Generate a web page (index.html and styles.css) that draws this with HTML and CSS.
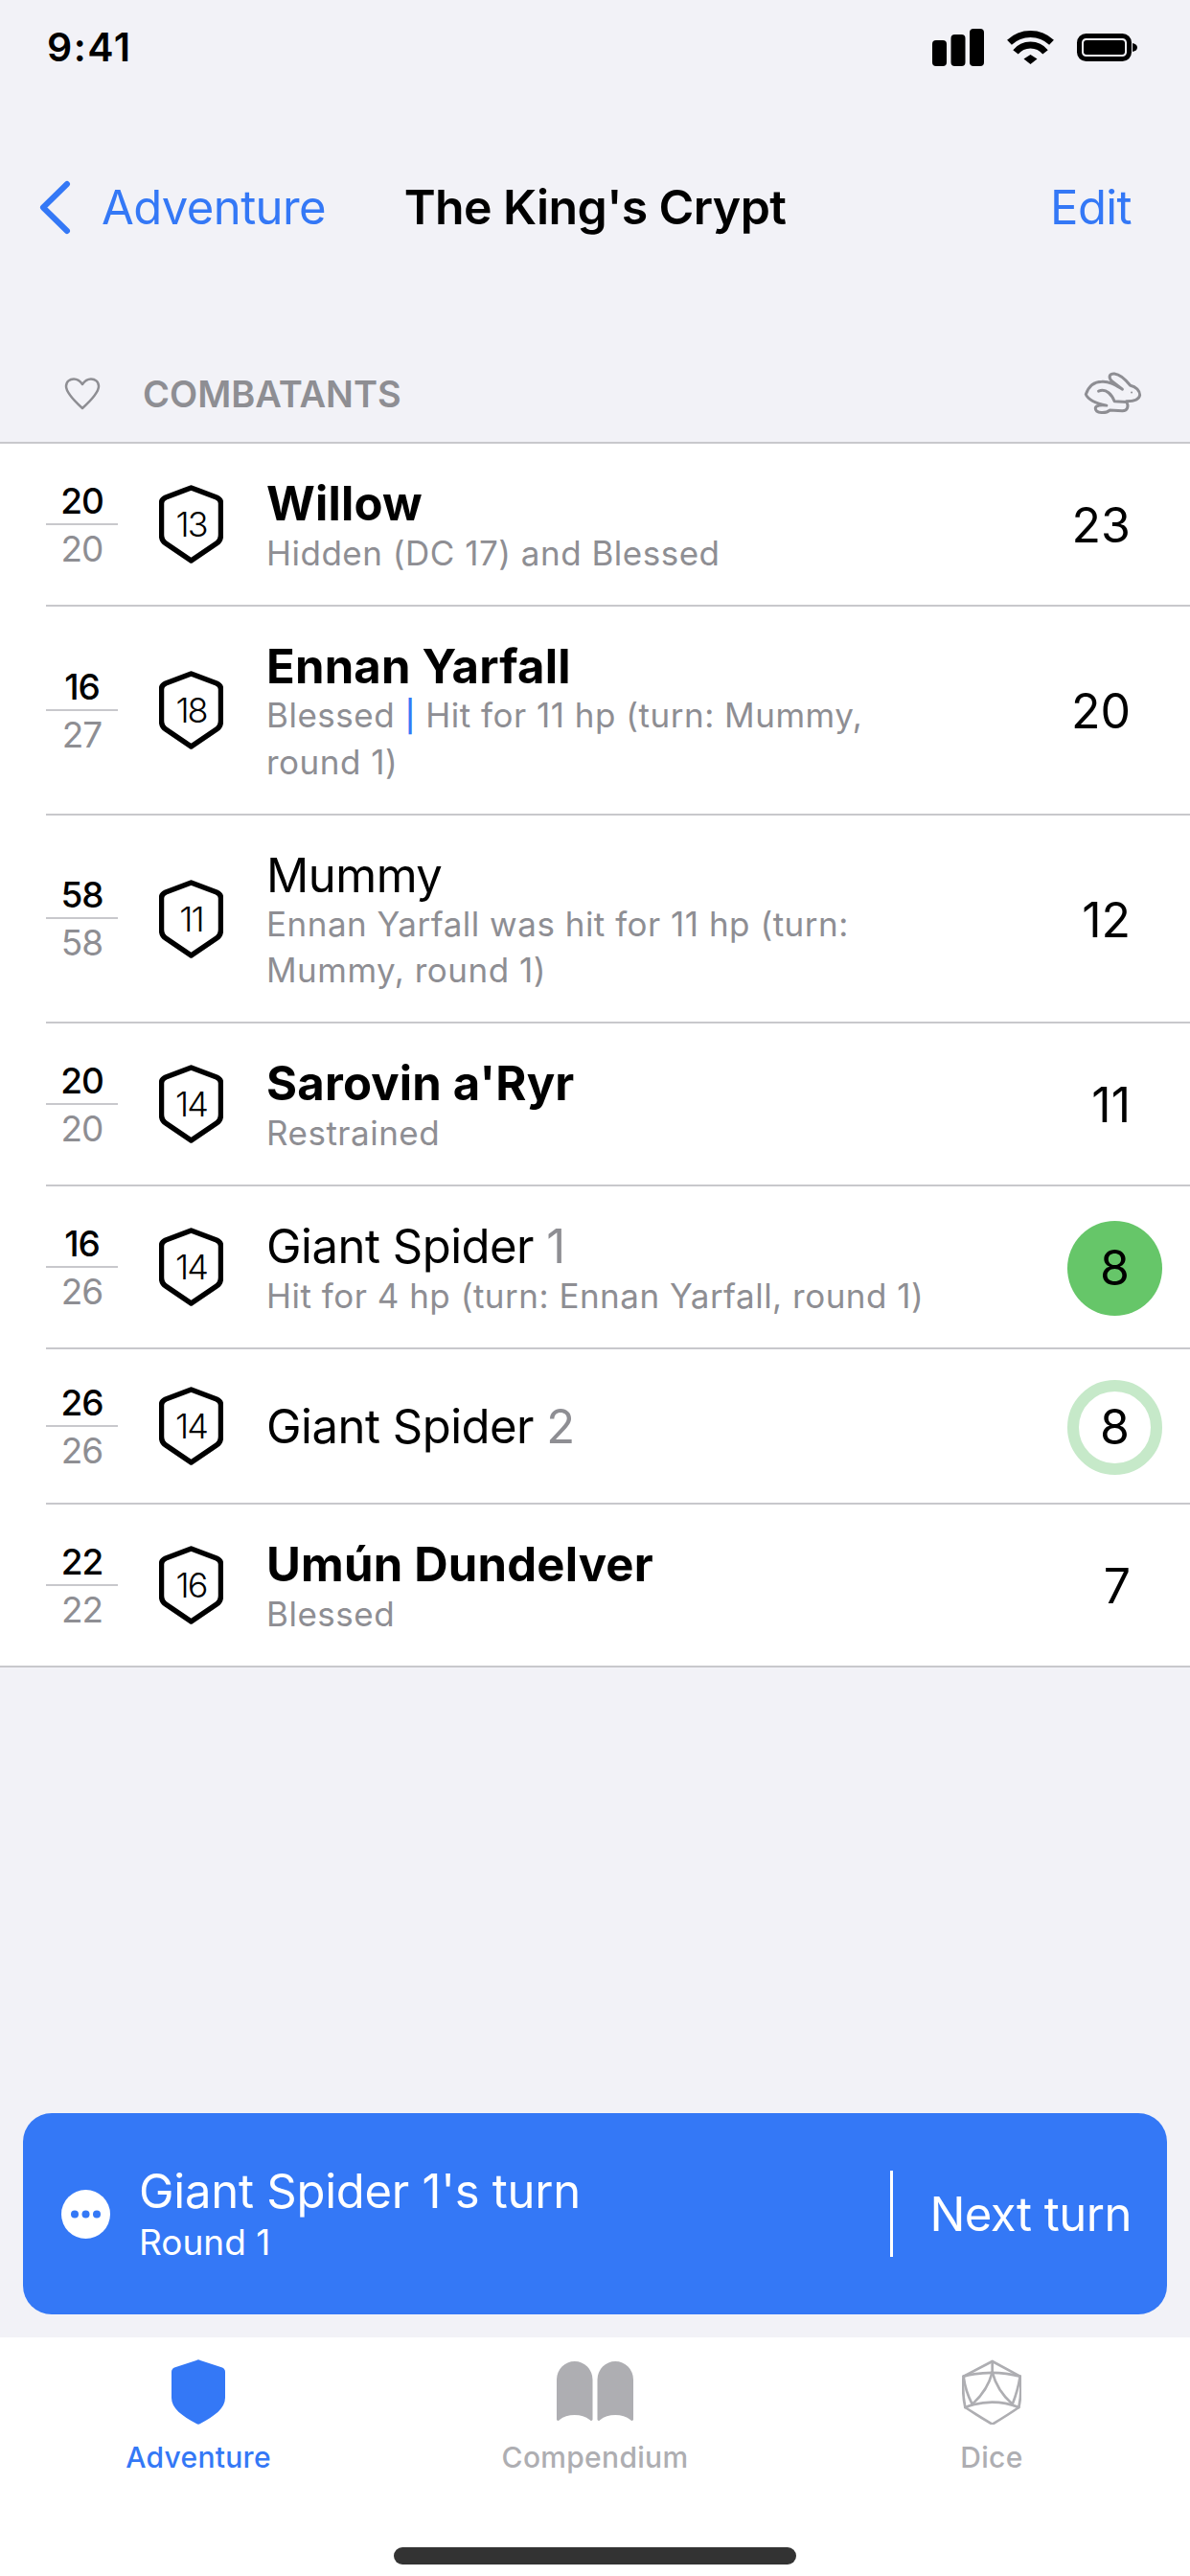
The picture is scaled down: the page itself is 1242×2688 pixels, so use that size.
FILE: index.html
```html
<!DOCTYPE html>
<html lang="en">
<head>
    <meta charset="UTF-8">
    <meta name="viewport" content="width=device-width, initial-scale=1.0">
    <title>The King's Crypt</title>
    <link rel="stylesheet" href="styles.css">
</head>
<body>

    <svg class="defs" width="0" height="0">
        <symbol id="shield" viewBox="0 0 67 82">
            <path d="M33.500 3 L60 13 Q64.500 15 64.500 19 V52 Q64.500 58 60 61 L33.500 79 L7 61 Q2.500 58 2.500 52 V19 Q2.500 15 7 13 Z" fill="none" stroke="#000" stroke-width="5.500" stroke-linejoin="round"/>
        </symbol>
    </svg>

    <!-- Status bar -->
    <div class="status">
        <span class="time">9:41</span>
        <div class="status-icons">
            <svg width="54" height="39" viewBox="0 0 54 39"><rect y="12" width="15" height="27" rx="4"/><rect x="19.500" y="6" width="15" height="33" rx="4"/><rect x="39" width="15" height="39" rx="4"/></svg>
            <svg width="49" height="35" viewBox="0 0 49 35"><path d="M2.500 12.300 A32 32 0 0 1 46.500 12.300" fill="none" stroke="#000" stroke-width="7"/><path d="M9 22.400 A20 20 0 0 1 40 22.400" fill="none" stroke="#000" stroke-width="7"/><path d="M17.500 29.500 L24.500 25 L31.500 29.500 L24.500 35 Z"/></svg>
            <svg width="63" height="29" viewBox="0 0 63 29"><rect x="2.500" y="2.500" width="52" height="24" rx="7" fill="none" stroke="#000" stroke-width="5"/><rect x="7" y="7" width="43" height="15" rx="3"/><path d="M58 10 Q63 11 63 14.500 Q63 18 58 19 Z"/></svg>
        </div>
    </div>

    <!-- Navbar -->
    <nav class="navbar">
        <a class="nav-back">
            <svg width="33" height="57" viewBox="0 0 33 57"><path d="M29 4 L4 28.500 L29 53" fill="none" stroke="#3478f6" stroke-width="6" stroke-linecap="round" stroke-linejoin="round"/></svg>
            <span>Adventure</span>
        </a>
        <h1 class="nav-title">The King's Crypt</h1>
        <a class="nav-edit">Edit</a>
    </nav>

    <!-- Section header -->
    <div class="section-head">
        <svg width="38" height="34" viewBox="0 0 38 34"><path d="M19 32 C8 22 2 15 2 9 C2 4 6 1.500 10 1.500 C14 1.500 17 4 19 7 C21 4 24 1.500 28 1.500 C32 1.500 36 4 36 9 C36 15 30 22 19 32 Z" fill="none" stroke="#8e8e93" stroke-width="2.500" stroke-linejoin="round"/></svg>
        <span class="section-title">COMBATANTS</span>
        <svg class="rabbit" width="63" height="47" viewBox="90 55 190 140" fill="none" stroke="#8e8e93" stroke-width="9" stroke-linecap="round" stroke-linejoin="round"><path d="M100 128 C108 105 125 88 150 88 C175 86 195 100 215 112 L180 85 C170 72 175 62 190 63 C208 65 228 85 240 100 C258 103 270 118 270 130 C268 145 250 150 228 150 C235 165 232 180 215 180 L175 178 C165 188 130 190 130 172 C130 162 150 160 165 163 C140 158 108 148 100 128 Z"/><path d="M140 118 C165 108 182 130 190 150 L228 152"/><circle cx="244" cy="122" r="3" fill="#8e8e93" stroke="none"/></svg>
    </div>

    <!-- Combatant list -->
    <main class="list-area">
        <ul class="list">
            <li class="row">
                <div class="hp"><span class="hp-cur">20</span><span class="hp-max">20</span></div>
                <div class="ac"><svg width="67" height="82"><use href="#shield"/></svg><span>13</span></div>
                <div class="info">
                    <div class="name strong">Willow</div>
                    <div class="note">Hidden (DC 17) and Blessed</div>
                </div>
                <div class="init">23</div>
            </li>
            <li class="row">
                <div class="hp"><span class="hp-cur">16</span><span class="hp-max">27</span></div>
                <div class="ac"><svg width="67" height="82"><use href="#shield"/></svg><span>18</span></div>
                <div class="info">
                    <div class="name strong">Ennan Yarfall</div>
                    <div class="note wrapped">Blessed <span class="sep">|</span> Hit for 11 hp (turn: Mummy,<br>round 1)</div>
                </div>
                <div class="init">20</div>
            </li>
            <li class="row">
                <div class="hp"><span class="hp-cur">58</span><span class="hp-max">58</span></div>
                <div class="ac"><svg width="67" height="82"><use href="#shield"/></svg><span>11</span></div>
                <div class="info">
                    <div class="name">Mummy</div>
                    <div class="note wrapped">Ennan Yarfall was hit for 11 hp (turn:<br>Mummy, round 1)</div>
                </div>
                <div class="init">12</div>
            </li>
            <li class="row">
                <div class="hp"><span class="hp-cur">20</span><span class="hp-max">20</span></div>
                <div class="ac"><svg width="67" height="82"><use href="#shield"/></svg><span>14</span></div>
                <div class="info">
                    <div class="name strong">Sarovin a'Ryr</div>
                    <div class="note">Restrained</div>
                </div>
                <div class="init">11</div>
            </li>
            <li class="row">
                <div class="hp"><span class="hp-cur">16</span><span class="hp-max">26</span></div>
                <div class="ac"><svg width="67" height="82"><use href="#shield"/></svg><span>14</span></div>
                <div class="info">
                    <div class="name">Giant Spider <span class="suffix">1</span></div>
                    <div class="note">Hit for 4 hp (turn: Ennan Yarfall, round 1)</div>
                </div>
                <div class="init current">8</div>
            </li>
            <li class="row">
                <div class="hp"><span class="hp-cur">26</span><span class="hp-max">26</span></div>
                <div class="ac"><svg width="67" height="82"><use href="#shield"/></svg><span>14</span></div>
                <div class="info">
                    <div class="name">Giant Spider <span class="suffix">2</span></div>
                </div>
                <div class="init linked">8</div>
            </li>
            <li class="row">
                <div class="hp"><span class="hp-cur">22</span><span class="hp-max">22</span></div>
                <div class="ac"><svg width="67" height="82"><use href="#shield"/></svg><span>16</span></div>
                <div class="info">
                    <div class="name strong">Umún Dundelver</div>
                    <div class="note">Blessed</div>
                </div>
                <div class="init">7</div>
            </li>
        </ul>
    </main>

    <!-- Turn banner -->
    <div class="turn">
        <svg class="turn-more" width="51" height="51" viewBox="0 0 51 51"><circle cx="25.500" cy="25.500" r="25.500" fill="#fff"/><circle cx="14" cy="25.500" r="4" fill="#3478f6"/><circle cx="25.500" cy="25.500" r="4" fill="#3478f6"/><circle cx="37" cy="25.500" r="4" fill="#3478f6"/></svg>
        <div class="turn-text">
            <div class="turn-title">Giant Spider 1's turn</div>
            <div class="turn-round">Round 1</div>
        </div>
        <div class="turn-next">Next turn</div>
    </div>

    <!-- Tab bar -->
    <footer class="tabbar">
        <div class="tabs">
            <a class="tab active">
                <svg width="56" height="68" viewBox="0 0 56 68"><path d="M26 1 Q28 -0.500 30 1 L53 8.500 Q56 10 56 13 V40 C56 51 45 59 30 67 Q28 68.500 26 67 C11 59 0 51 0 40 V13 Q0 10 3 8.500 Z" fill="#3478f6"/></svg>
                <span>Adventure</span>
            </a>
            <a class="tab">
                <svg width="80" height="68" viewBox="0 -2 80 68"><path d="M0 19 A18.750 19 0 0 1 37.500 19 V61 Q36 63 34.500 61 Q28 56 18.750 56 Q9 56 3 61 Q1.500 63 0 61 Z" fill="#aeaeb2"/><path d="M42.500 19 A18.750 19 0 0 1 80 19 V61 Q78.500 63 77 61 Q70.500 56 61.250 56 Q51.500 56 45.500 61 Q44 63 42.500 61 Z" fill="#aeaeb2"/></svg>
                <span>Compendium</span>
            </a>
            <a class="tab">
                <svg width="62" height="68" viewBox="40 32 186 204" fill="none" stroke="#aeaeb2" stroke-width="8" stroke-linejoin="round" stroke-linecap="round"><path d="M135 38 L222 85 Q228 135 218 182 Q185 205 135 235 Q85 205 50 182 Q40 135 45 85 Z"/><path d="M45 85 Q135 62 222 85"/><path d="M50 182 Q135 150 218 182"/><path d="M135 38 V72"/><path d="M135 72 Q120 130 72 172"/><path d="M135 72 Q150 130 198 172"/><path d="M45 85 Q50 130 72 172"/><path d="M222 85 Q215 130 198 172"/></svg>
                <span>Dice</span>
            </a>
        </div>
        <div class="home-bar"></div>
    </footer>

</body>
</html>
```

FILE: styles.css
```css
/* Root color scheme */
:root {
    --blue: #3478f6;
    --grey: #8e8e93;
    --light-grey: #aeaeb2;
    --line: #c8c8cc;
    --page: #f2f2f7;
}

* {
    margin: 0;
    padding: 0;
    box-sizing: border-box;
}

body {
    width: 1242px;
    height: 2688px;
    display: flex;
    flex-direction: column;
    overflow: hidden;
    font-family: Inter, "Liberation Sans", sans-serif;
    background-color: var(--page);
    color: #000;
}

.defs {
    position: absolute;
}

/* Status bar */
.status {
    height: 98px;
    flex: none;
    display: flex;
    align-items: center;
    justify-content: space-between;
    padding: 0 55px 0 49px;
}

.time {
    font-size: 41px;
    font-weight: 600;
    letter-spacing: 1.5px;
}

.status-icons {
    display: flex;
    align-items: center;
    gap: 24px;
}

/* Navbar */
.navbar {
    height: 236px;
    flex: none;
    display: grid;
    grid-template-columns: 1fr auto 1fr;
    align-items: center;
    padding: 0 41px;
    font-size: 49px;
    letter-spacing: -0.6px;
}

.nav-back {
    display: flex;
    align-items: center;
    gap: 32px;
    color: var(--blue);
}

.nav-title {
    font-size: 50px;
    font-weight: 600;
}

.nav-edit {
    justify-self: end;
    margin-right: 20px;
    color: var(--blue);
}

/* Section header */
.section-head {
    height: 129px;
    flex: none;
    display: flex;
    align-items: center;
    padding: 26px 49px 0 67px;
    border-bottom: 2px solid var(--line);
}

.section-title {
    margin-left: 44px;
    font-size: 38px;
    font-weight: 600;
    color: var(--grey);
}

.rabbit {
    margin-left: auto;
}

/* Combatant list */
.list-area {
    flex: 1;
}

.list {
    list-style: none;
    background-color: #fff;
    padding-left: 48px;
    border-bottom: 2px solid var(--line);
}

.row {
    display: flex;
    align-items: center;
    padding: 30px 29px 30px 0;
    border-bottom: 2px solid var(--line);
}

.row:last-child {
    border-bottom: 0;
}

.hp {
    width: 75px;
    flex: none;
    display: flex;
    flex-direction: column;
    align-items: center;
    font-size: 37px;
    letter-spacing: -1px;
}

.hp-cur {
    width: 100%;
    padding-top: 2px;
    text-align: center;
    font-weight: 450;
    line-height: 46px;
    border-bottom: 2px solid var(--line);
}

.hp-max {
    padding-top: 1px;
    line-height: 48px;
    color: var(--grey);
}

.ac {
    position: relative;
    width: 67px;
    height: 82px;
    flex: none;
    margin-left: 43px;
    display: flex;
    align-items: center;
    justify-content: center;
    font-size: 36px;
    font-weight: 350;
    letter-spacing: -2px;
}

.ac svg {
    position: absolute;
    top: 0;
    left: 0;
}

.info {
    flex: 1;
    margin-left: 45px;
}

.name {
    font-size: 49px;
    line-height: 65px;
    letter-spacing: -0.5px;
}

.name.strong {
    font-weight: 700;
    letter-spacing: 0.2px;
}

.suffix {
    color: var(--grey);
}

.note {
    margin-top: -5px;
    font-size: 35px;
    line-height: 48px;
    letter-spacing: 0.5px;
    color: var(--grey);
}

.note.wrapped {
    line-height: 47.500px;
}

.sep {
    font-size: 32px;
    font-weight: 500;
    color: var(--blue);
}

.init {
    width: 99px;
    flex: none;
    margin-top: 2px;
    padding-right: 33px;
    text-align: right;
    font-size: 50px;
}

.init.current,
.init.linked {
    height: 99px;
    padding: 0;
    border-radius: 50%;
    text-align: center;
    line-height: 99px;
}

.init.current {
    background-color: #66c669;
}

.init.linked {
    margin-bottom: -1px;
    border: 12px solid #c6e9c9;
    line-height: 75px;
}

/* Turn banner */
.turn {
    height: 210px;
    flex: none;
    margin: 0 24px 24px;
    display: flex;
    align-items: center;
    padding: 0 37px 0 40px;
    border-radius: 30px;
    background-color: var(--blue);
    color: #fff;
}

.turn-more {
    flex: none;
}

.turn-text {
    flex: 1;
    margin-left: 30px;
}

.turn-title {
    font-size: 49px;
    line-height: 60px;
    letter-spacing: -0.25px;
}

.turn-round {
    font-size: 37px;
    line-height: 46px;
}

.turn-next {
    height: 90px;
    display: flex;
    align-items: center;
    padding-left: 38px;
    border-left: 3px solid #fff;
    font-size: 49px;
    letter-spacing: -0.5px;
}

/* Tab bar */
.tabbar {
    height: 249px;
    flex: none;
    display: flex;
    flex-direction: column;
    align-items: center;
    background-color: #fff;
}

.tabs {
    width: 100%;
    display: grid;
    grid-template-columns: repeat(3, 1fr);
    padding-top: 23px;
}

.tab {
    display: flex;
    flex-direction: column;
    align-items: center;
    gap: 16px;
    font-size: 30px;
    font-weight: 500;
    letter-spacing: 0.3px;
    color: var(--light-grey);
}

.tab.active {
    color: var(--blue);
}

.home-bar {
    width: 420px;
    height: 18px;
    margin-top: auto;
    margin-bottom: 12px;
    border-radius: 9px;
    background-color: #333;
}
```
